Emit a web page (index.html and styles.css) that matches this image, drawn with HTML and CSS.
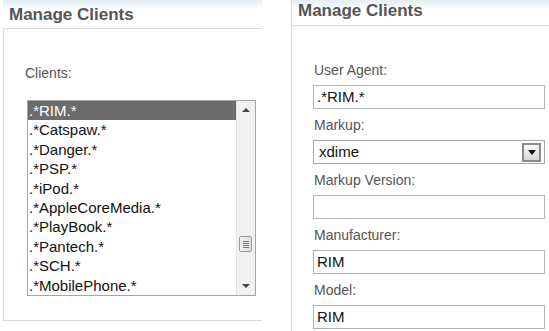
FILE: index.html
```html
<!DOCTYPE html>
<html>
<head>
<meta charset="utf-8">
<link rel="stylesheet" href="styles.css">
</head>
<body>
<div class="page">
  <div class="panel left">
    <div class="head">Manage Clients</div>
    <div class="body-left">
      <div class="label">Clients:</div>
      <div class="listbox">
        <div class="items">
          <div class="item sel">.*RIM.*</div>
          <div class="item">.*Catspaw.*</div>
          <div class="item">.*Danger.*</div>
          <div class="item">.*PSP.*</div>
          <div class="item">.*iPod.*</div>
          <div class="item">.*AppleCoreMedia.*</div>
          <div class="item">.*PlayBook.*</div>
          <div class="item">.*Pantech.*</div>
          <div class="item">.*SCH.*</div>
          <div class="item">.*MobilePhone.*</div>
        </div>
        <div class="scroll">
          <div class="arrow up"></div>
          <div class="track"><div class="thumb"><span></span><span></span><span></span><span></span></div></div>
          <div class="arrow down"></div>
        </div>
      </div>
    </div>
  </div>
  <div class="panel right">
    <div class="head">Manage Clients</div>
    <div class="form">
      <div class="field">
        <div class="label">User Agent:</div>
        <div class="input">.*RIM.*</div>
      </div>
      <div class="field">
        <div class="label">Markup:</div>
        <div class="input select"><span class="val">xdime</span><span class="btn"><span class="tri"></span></span></div>
      </div>
      <div class="field">
        <div class="label">Markup Version:</div>
        <div class="input"></div>
      </div>
      <div class="field">
        <div class="label">Manufacturer:</div>
        <div class="input">RIM</div>
      </div>
      <div class="field">
        <div class="label">Model:</div>
        <div class="input">RIM</div>
      </div>
    </div>
  </div>
</div>
</body>
</html>
```
FILE: styles.css
```css
html, body {
  margin: 0;
  padding: 0;
  background: #fff;
}
body {
  width: 549px;
  height: 331px;
  overflow: hidden;
  font-family: "Liberation Sans", Arial, sans-serif;
}
.page {
  display: flex;
  align-items: flex-start;
  height: 331px;
}
.panel {
  box-sizing: border-box;
}
.left {
  margin-left: 3px;
  width: 259px;
  height: 321px;
  border-left: 1px solid #d8d8d8;
  border-bottom: 1px solid #d8d8d8;
}
.right {
  margin-left: 29px;
  flex: 1;
  height: 331px;
  border-left: 1px solid #d8d8d8;
}
.head {
  font-weight: bold;
  font-size: 17px;
  line-height: 20px;
  color: #555;
  box-sizing: border-box;
  border-bottom: 1px solid #dcdcdc;
  background: linear-gradient(#e4eef3 0, #eef4f7 4px, #fff 9px);
}
.left .head {
  height: 29px;
  padding: 5px 0 0 6px;
  margin-left: -1px;
}
.right .head {
  height: 26px;
  padding: 1px 0 0 6px;
}
.label {
  font-size: 14px;
  color: #555;
  line-height: 16px;
}
.body-left {
  padding: 36px 0 0 21px;
}
.listbox {
  margin-top: 19px;
  margin-left: 2px;
  width: 229px;
  height: 196px;
  box-sizing: border-box;
  border: 1px solid #a5a5a5;
  display: flex;
}
.items {
  flex: 1;
}
.item {
  font-size: 15px;
  color: #111;
  height: 19.4px;
  line-height: 19.4px;
  padding-left: 1px;
  white-space: nowrap;
}
.item.sel {
  background: #6c6c6c;
  color: #fff;
}
.scroll {
  width: 18px;
  background: #f1f1f1;
  border-left: 1px solid #e2e2e2;
  display: flex;
  flex-direction: column;
}
.arrow {
  height: 18px;
  display: flex;
  align-items: center;
  justify-content: center;
}
.arrow.up::before {
  content: "";
  border-left: 4px solid transparent;
  border-right: 4px solid transparent;
  border-bottom: 4px solid #444;
}
.arrow.down::before {
  content: "";
  border-left: 4px solid transparent;
  border-right: 4px solid transparent;
  border-top: 4px solid #444;
}
.track {
  flex: 1;
  position: relative;
}
.thumb {
  position: absolute;
  left: 2px;
  top: 117px;
  width: 13px;
  height: 16px;
  box-sizing: border-box;
  border: 1px solid #9a9a9a;
  border-radius: 2px;
  background: linear-gradient(90deg, #f4f4f4, #dedede);
  display: flex;
  flex-direction: column;
  justify-content: center;
  align-items: center;
  gap: 1px;
}
.thumb span {
  width: 6px;
  height: 1px;
  background: #777;
}
.form {
  padding: 36px 0 0 21px;
}
.field {
  margin-bottom: 8px;
}
.field .label {
  margin-bottom: 7px;
  margin-left: 1px;
}
.field:last-child {
  margin-bottom: 0;
}
.input {
  width: 232px;
  height: 24px;
  box-sizing: border-box;
  border: 1px solid #b4b4b4;
  font-size: 15px;
  color: #111;
  line-height: 22px;
  padding-left: 3px;
  white-space: nowrap;
}
.select {
  display: flex;
  justify-content: space-between;
  align-items: center;
  padding-left: 5px;
  padding-right: 3px;
  border-color: #a8a8a8;
}
.btn {
  width: 19px;
  height: 19px;
  box-sizing: border-box;
  border: 2px solid #8a8a8a;
  background: linear-gradient(#f7f7f7, #d6d6d6);
  display: flex;
  align-items: center;
  justify-content: center;
}
.tri {
  width: 0;
  height: 0;
  border-left: 4px solid transparent;
  border-right: 4px solid transparent;
  border-top: 5px solid #111;
}
```
